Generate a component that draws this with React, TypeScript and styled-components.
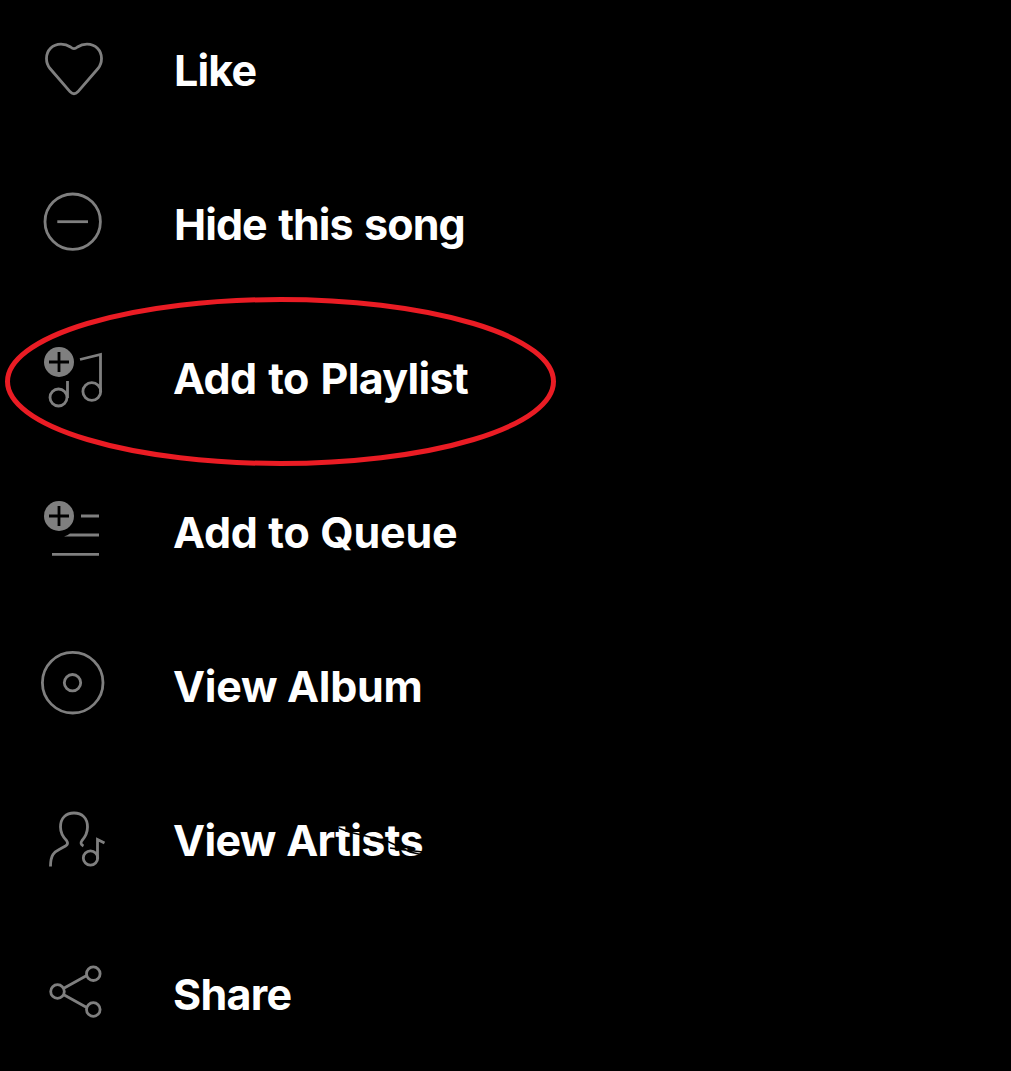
import React from "react";
import styled, { createGlobalStyle } from "styled-components";

const Global = createGlobalStyle`
  html, body { margin: 0; background: #000; }
  body { overflow: hidden; }
`;

const Menu = styled.ul`
  position: relative;
  margin: 0;
  padding: 0;
  width: 1011px;
  height: 1071px;
  overflow: hidden;
  list-style: none;
  background: #000;
`;

const Row = styled.li`
  box-sizing: border-box;
  display: flex;
  align-items: flex-start;
  gap: 53px;
  height: 154px;
  padding: 30px 0 0 30px;
`;

const Icon = styled.svg`
  flex: none;
  width: 90px;
  height: 90px;
  fill: none;
  stroke: #7f7f7f;
  stroke-width: 2.8;
`;

const Label = styled.span<{ $spacing: number; $word: number; $indent: number }>`
  position: relative;
  margin-top: 14px;
  margin-left: ${(p) => p.$indent}px;
  font: 700 43px/52px Inter, "Liberation Sans", sans-serif;
  letter-spacing: ${(p) => p.$spacing}px;
  word-spacing: ${(p) => p.$word}px;
  color: #fff;
  white-space: nowrap;
`;

const Scratch = styled.svg`
  position: absolute;
  left: 162px;
  top: 6px;
  width: 95px;
  height: 45px;
  fill: none;
  stroke: #000;
  stroke-width: 1.7;
`;

const Highlight = styled.svg`
  position: absolute;
  left: 0;
  top: 290px;
  width: 570px;
  height: 185px;
  fill: none;
  stroke: #ea1c24;
  stroke-width: 5;
`;

const Plus = ({ cy }: { cy: number }) => (
  <>
    <circle cx="29" cy={cy} r="15" fill="#7f7f7f" stroke="none" />
    <path d={`M19 ${cy}h20M29 ${cy - 10}v20`} stroke="#000" />
  </>
);

const items = [
  {
    label: "Like", spacing: -0.8, word: 0, indent: 1, top: 0,
    icon: <path strokeLinejoin="round" d="M44 18.7Q42.500 18.700 40.500 17C37.500 15 34.500 14.200 31 14.200C22.500 14.200 16.500 20.500 16.500 28.500C16.500 32.500 17.500 35.500 20 38.500L40.200 61.800Q44 65.700 47.800 61.800L68 38.500C70.500 35.500 71.500 32.500 71.500 28.500C71.500 20.500 65.500 14.200 57 14.200C53.500 14.200 50.500 15 47.500 17Q45.500 18.700 44 18.700Z" />,
  },
  {
    label: "Hide this song", spacing: -0.95, word: 2.2, indent: 1, top: 4,
    icon: <><circle cx="42.700" cy="41.700" r="27.700" /><path d="M27.300 41.700H58" /></>,
  },
  {
    label: "Add to Playlist", spacing: -0.65, word: 2.3, indent: 0, top: 3,
    icon: <><Plus cy={27} /><circle cx="28.500" cy="62.500" r="8.500" /><path d="M37.500 46V63" /><circle cx="61.800" cy="56.500" r="8.900" /><path d="M50 24.500L70.500 19.500V57" /></>,
  },
  {
    label: "Add to Queue", spacing: -0.2, word: 0.6, indent: 0, top: 2,
    icon: <><Plus cy={26} /><path d="M51 26H69M22 64.300H69" /><path d="M34 46.500Q37.500 45.700 40 43.600H69V46.500Z" fill="#7f7f7f" stroke="none" /></>,
  },
  {
    label: "View Album", spacing: -0.3, word: 0, indent: 0, top: 6,
    icon: <><circle cx="42.700" cy="42.700" r="30.300" /><circle cx="42.500" cy="42.700" r="8.200" /></>,
  },
  {
    label: "View Artists", spacing: -0.67, word: 1, indent: 0, top: 0,
    icon: <><path d="M20.500 66.500C20.500 55 24 52 30 49L35.500 46Q39 44 36.500 40.500C32 36 30.500 32 30.500 27C30.500 18 36 13 44 13C52 13 57.500 18 57.500 27C57.500 32 56 36 52 40.500Q49.500 44 53.500 46" /><circle cx="60.500" cy="58" r="7.200" /><path d="M67.500 59V39.500L74.500 43" /></>,
  },
  {
    label: "Share", spacing: -0.7, word: 0, indent: 0, top: -1,
    icon: <><circle cx="27.500" cy="36.500" r="6.800" /><circle cx="63.300" cy="18.700" r="6.800" /><circle cx="63.300" cy="54.500" r="6.800" /><path d="M33.800 33.200L57.200 20.200M33.800 39.800L57.200 52.800" /></>,
  },
];

export default function App() {
  return (
    <>
      <Global />
      <Menu>
        {items.map(({ label, spacing, word, indent, top, icon }) => (
          <Row key={label}>
            <Icon viewBox={`0 ${top} 90 90`}>{icon}</Icon>
            <Label $spacing={spacing} $word={word} $indent={indent}>
              {label}
              {label === "View Artists" && (
                <Scratch viewBox="0 0 95 45"><path d="M4 8L14 12L52 21L75 32L88 35M55 28L70 30L88 32" /></Scratch>
              )}
            </Label>
          </Row>
        ))}
        <Highlight viewBox="0 0 570 185"><ellipse cx="280.500" cy="91.500" rx="273" ry="82" /></Highlight>
      </Menu>
    </>
  );
}
